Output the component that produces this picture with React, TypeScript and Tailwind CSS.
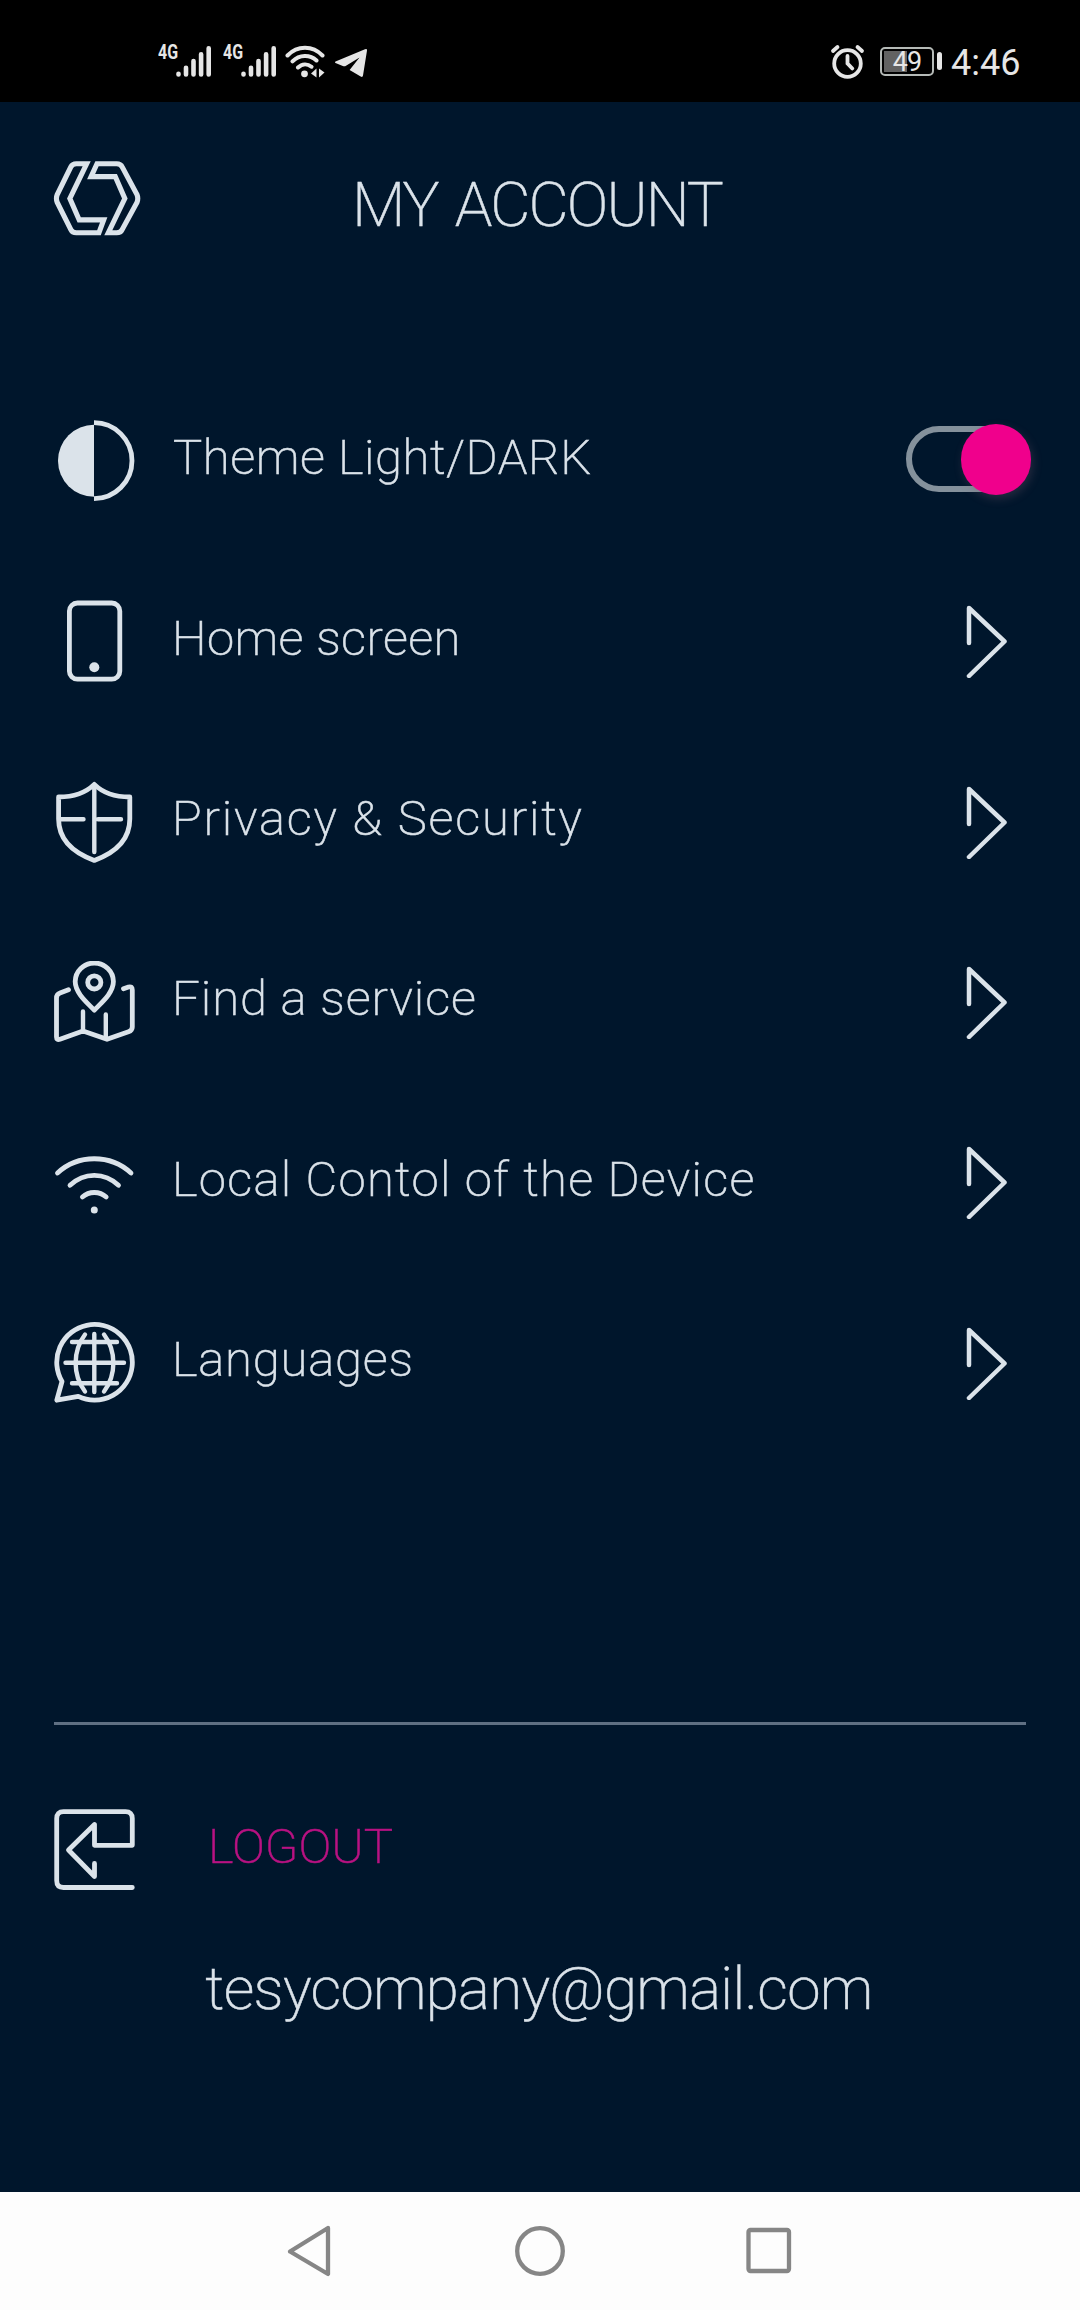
import type { ReactNode } from 'react';

interface MenuItem {
  label: string;
  labelClass: string;
  icon: ReactNode;
}

function Icon({ children }: { children: ReactNode }) {
  return (
    <svg
      className="h-[82px] w-[82px] flex-shrink-0"
      viewBox="0 0 82 82"
      fill="none"
      stroke="currentColor"
      strokeWidth={4.8}
      strokeLinecap="round"
      strokeLinejoin="round"
    >
      {children}
    </svg>
  );
}

const menuItems: MenuItem[] = [
  {
    label: 'Home screen',
    labelClass: 'tracking-[0.4px]',
    icon: (
      <Icon>
        <rect x="15.4" y="3" width="50.4" height="76.2" rx="8" />
        <circle cx="40.3" cy="67.2" r="5" fill="currentColor" stroke="none" />
      </Icon>
    ),
  },
  {
    label: 'Privacy & Security',
    labelClass: 'tracking-[1.8px]',
    icon: (
      <Icon>
        <path d="M40.3 3.4C32 11.5 19 16 4.6 16V38C4.6 60 20 72 40.3 79.4C60.6 72 75.8 60 75.8 38V16C62 16 48.5 11.5 40.3 3.4Z" />
        <path d="M40.3 5V71M6 38.3H29.5M44 38.3H67" strokeWidth={4.4} />
      </Icon>
    ),
  },
  {
    label: 'Find a service',
    labelClass: 'tracking-[0.92px]',
    icon: (
      <Icon>
        <path d="M40.3 49.2C34.5 42.8 21.2 32.5 21.2 20.6A19.1 18.6 0 0 1 59.4 20.6C59.4 32.5 46.1 42.8 40.3 49.2Z" />
        <circle cx="40.3" cy="21.4" r="6.6" />
        <path d="M14.5 28.8L6 32Q2.5 33.3 2.5 37V76Q2.5 79.5 6 78.3L29 70L53 78.3L74.5 70.8Q78.3 69.5 78.3 66V29Q78.3 25 74.5 26L69.5 27.8" />
        <path d="M29 50.5V69M51.8 53.5V77" strokeWidth={4.4} />
      </Icon>
    ),
  },
  {
    label: 'Local Contol of the Device',
    labelClass: 'tracking-[1.26px]',
    icon: (
      <Icon>
        <path d="M3.5 32C24 13 56.5 13 77 32" />
        <path d="M16 44.3C30 31 50.5 31 64.5 44.3" />
        <path d="M28.4 56C35 50 45.6 50 52.2 56" />
        <circle cx="40.3" cy="69" r="3.5" fill="currentColor" stroke="none" />
      </Icon>
    ),
  },
  {
    label: 'Languages',
    labelClass: 'tracking-[0.8px]',
    icon: (
      <Icon>
        <path d="M8 59.5A37.8 37.8 0 1 1 24.3 74.4L2.8 78.2Z" />
        <path d="M40.3 12V70M18 20H63M11.5 40.7H70M18 61.2H63" strokeWidth={4.4} />
        <path d="M31 12.5C18.5 29 18.5 53 31 69.5M50 12.5C62.5 29 62.5 53 50 69.5" strokeWidth={4.4} />
      </Icon>
    ),
  },
];

function SignalBars() {
  return (
    <div className="relative h-9 w-[54px]">
      <span className="absolute left-0 -top-px origin-left scale-x-[0.76] font-['Roboto'] text-[21px] font-bold leading-5">4G</span>
      <svg className="h-9 w-[54px]" viewBox="0 0 54 36" stroke="currentColor" strokeWidth={4.6} strokeLinecap="round">
        <path d="M20.5 31.5V30.8M28 31.5V24.8M35.5 31.5V18M43.1 31.5V11.3M50.7 31.5V5.3" />
      </svg>
    </div>
  );
}

function StatusBar() {
  return (
    <div className="flex h-[102px] items-center bg-black pt-5 pl-[158px] text-[#e6e6e6] [-webkit-text-stroke:0]">
      <div className="flex items-center gap-[11px]">
        <SignalBars />
        <SignalBars />
      </div>
      <svg className="ml-2 h-9 w-10" viewBox="0 0 40 36" fill="none" stroke="currentColor" strokeWidth={4} strokeLinecap="round">
        <path d="M2.5 12.5C12.5 2.2 27.5 2.2 37.5 12.5M7.5 18.3C14.5 11.3 25 11.3 31.5 17.5M13 24.5C17 20.5 22.5 20.5 26.5 23.7" />
        <circle cx="19.5" cy="30.8" r="3.4" fill="currentColor" stroke="none" />
        <path d="M31.5 25.5V34.5L26 30.5ZM34 25.5L39.5 29.5L34 34.5Z" fill="currentColor" stroke="none" />
      </svg>
      <svg className="ml-[9px] h-9 w-9" viewBox="0 0 36 36" fill="currentColor">
        <path d="M1.5 20Q0.2 19.3 1.5 18.4L31 6.2Q33.3 5.5 33 7.5L29 32.5Q28.6 34.8 26.7 33.5L15.6 27L25.5 14.5L12 22.800Q10.500 23.700 8.800 23Z" />
      </svg>
      <svg className="ml-[460px] h-9 w-9" viewBox="0 0 36 36" fill="none" stroke="currentColor" strokeWidth={3.8} strokeLinecap="round">
        <circle cx="17.5" cy="20.5" r="13.3" />
        <path d="M17.5 13V20.5L22.3 25.5M3 8L7.5 4M27.5 4L32 8" />
      </svg>
      <div className="ml-3.5 flex items-center gap-[3px]">
        <div className="relative flex h-[29px] w-[54px] items-center justify-center rounded-[5px] border-2 border-[#b5bab7]">
          <div className="absolute left-0.5 top-0.5 h-[21px] w-[23px] bg-[#626262]" />
          <span className="relative pt-0.5 font-['Roboto'] text-[27px] leading-none font-normal tracking-[-1px]">49</span>
        </div>
        <div className="h-[18px] w-[5px] rounded-sm bg-[#e6e6e6]" />
      </div>
      <span className="ml-[9px] pt-1 font-['Roboto'] text-[36px] leading-none font-normal">4:46</span>
    </div>
  );
}

function Logo() {
  return (
    <svg className="mt-px h-[75px] w-[88px]" viewBox="-1 0 89 76" fill="none" stroke="currentColor" strokeWidth={5.2}>
      <path d="M33 2.8H22.5Q18.5 2.8 17 6L3.2 34Q1.6 38 3.2 42L17 69.5Q18.5 72.7 22.5 72.7H45.5L50.3 59.7H25.5L16 38Z" />
      <path d="M55 72.7H63.5Q67.5 72.7 69 69.5L84 42Q85.6 38 84 34L69 6Q67.5 2.8 63.5 2.8H43.5L37.5 15.8H62L71.7 38Z" />
    </svg>
  );
}

function Chevron() {
  return (
    <svg
      className="h-[74px] w-11"
      viewBox="0 0 44 74"
      fill="none"
      stroke="currentColor"
      strokeWidth={4.5}
      strokeLinecap="round"
      strokeLinejoin="round"
    >
      <path d="M4 39V4L39.5 37.5L4 72" />
    </svg>
  );
}

function Toggle() {
  return (
    <button className="relative mb-1 h-[66px] w-[120px] rounded-full border-[6px] border-[#84919c]">
      <span className="absolute -top-2 right-[-11px] h-[71px] w-[70px] rounded-full bg-[#f0008c] shadow-[2px_4px_10px_rgba(120,90,110,0.3)]" />
    </button>
  );
}

export default function App() {
  return (
    <div className="flex h-[2310px] w-[1080px] flex-col bg-[#00162c] font-['Roboto',sans-serif] font-extralight text-[#dbe3ea] [-webkit-text-stroke:0.5px]">
      <StatusBar />

      {/* Header */}
      <header className="grid h-[269px] grid-cols-[88px_1fr_88px] items-start px-[53px] pt-[58px]">
        <Logo />
        <h1 className="pt-2 pr-1.5 text-center text-[62px] leading-[73px] tracking-[-1.9px] [word-spacing:4px]">MY ACCOUNT</h1>
      </header>

      {/* Menu */}
      <nav className="flex h-[1082px] flex-col pl-[54px] text-[49px]">
        <div className="flex flex-1 items-center pr-[54px]">
          <Icon>
            <path d="M40 4.8A36 36 0 0 0 40 76.8Z" fill="currentColor" stroke="none" />
            <path d="M40 2.7A38 38 0 0 1 40 78.7" strokeLinecap="butt" />
          </Icon>
          <span className="flex-1 pb-1.5 pl-[37px] tracking-[0.55px]">Theme Light/DARK</span>
          <Toggle />
        </div>
        {menuItems.map((item) => (
          <div key={item.label} className="flex flex-1 items-center pr-[71px]">
            {item.icon}
            <span className={`flex-1 pb-1.5 pl-9 ${item.labelClass}`}>{item.label}</span>
            <Chevron />
          </div>
        ))}
      </nav>

      {/* Account */}
      <section className="mx-[54px] mt-[269px] border-t-[3px] border-[#5f7083]">
        <div className="flex items-center pt-[84px]">
          <Icon>
            <path d="M40.5 54.5V67.5L14.5 41L40.5 15.5V36.3H78.3V9.5Q78.3 2.7 71.5 2.7H9.5Q2.7 2.7 2.7 9.5V71.5Q2.7 78.5 9.5 78.5H78.3" />
          </Icon>
          <span className="pb-1.5 pl-[72px] text-[49px] text-[#b91282]">LOGOUT</span>
        </div>
        <p className="pt-[63px] pr-0.5 text-center text-[60px] leading-[70px] tracking-[-0.7px]">tesycompany@gmail.com</p>
      </section>

      {/* Navigation bar */}
      <footer className="mt-auto flex h-[118px] items-center justify-center bg-[#fdfdfd]">
        <svg className="h-[54px] w-[506px]" viewBox="0 0 506 54" fill="none" stroke="#868686" strokeWidth={4.3} strokeLinejoin="round">
          <path d="M41 4L3 27.5L41 50Z" />
          <circle cx="253" cy="27" r="22.8" />
          <rect x="461.5" y="6" width="40.5" height="41" rx="2" />
        </svg>
      </footer>
    </div>
  );
}
